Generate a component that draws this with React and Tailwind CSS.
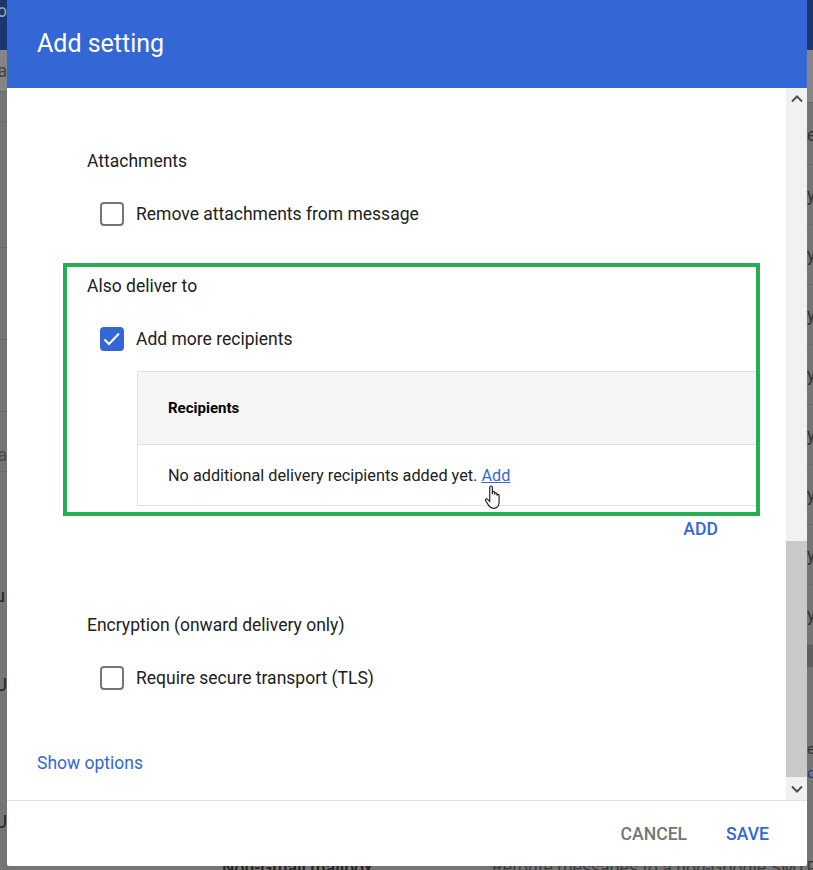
const rightRows = ['e', 'y', 'y', 'y', 'y', 'y', 'y', 'y', 'y'];

const leftSlivers = [
  { className: 'h-[50px] bg-[#1b3670] items-start pt-0 text-[#9aa5bd]', text: 'o' },
  { className: 'h-[42px] bg-[#858585] border-b border-[#6a6a6a] items-start pt-[10px] text-[#444]', text: 'a' },
  { className: 'h-[30px] border-b border-[#6a6a6a]', text: '' },
  { className: 'h-[126px] border-b border-[#6a6a6a]', text: '' },
  { className: 'h-[92px] border-b border-[#6a6a6a]', text: '' },
  { className: 'h-[72px] border-b border-[#6a6a6a]', text: '' },
  { className: 'h-[60px] border-b border-[#6a6a6a] items-start pt-[32px] text-[#4a4a4a]', text: 'a' },
  { className: 'h-[136px] items-start pt-[113px] pr-[2px] text-[#222]', text: 'u' },
  { className: 'h-[86px] items-start pt-[66px] text-[#222]', text: 'U' },
  { className: 'h-[176px] items-start pt-[117px] text-[#222]', text: 'U' },
];

function Checkbox({ checked }) {
  if (checked) {
    return (
      <span className="flex h-6 w-6 shrink-0 items-center justify-center rounded-[4px] bg-[#3367d6]">
        <svg width="24" height="24" viewBox="0 0 24 24" fill="none">
          <path d="M4.500 12.500l4.500 4.500 10-10.500" stroke="#fff" strokeWidth="2" />
        </svg>
      </span>
    );
  }
  return <span className="h-6 w-6 shrink-0 rounded-[4px] border-2 border-[#757575] bg-white" />;
}

function Section({ title, label, checked, className, titleClass = 'pl-[80px]', rowClass = 'pl-[93px]' }) {
  return (
    <div className={className}>
      <div className={`${titleClass} text-[17.5px] leading-[24px] text-[#212121]`}>{title}</div>
      <div className={`${rowClass} mt-[29px] flex items-center gap-3 text-[17.5px] leading-[24px] text-[#212121]`}>
        <Checkbox checked={checked} />
        <span>{label}</span>
      </div>
    </div>
  );
}

function HandCursor() {
  return (
    <svg className="absolute left-[3px] top-[20px]" width="18" height="26" viewBox="0 0 16 24" fill="#fff" stroke="#111" strokeWidth="1">
      <path d="M5 13V3c0-1.600 2.400-1.600 2.400 0v6.500V8c0-1.400 2.200-1.400 2.200 0v2V9c0-1.300 2-1.300 2 0v1.500c0-1.200 2-1.200 2 0V17c0 3-2 5.500-5 5.500-2.500 0-3.500-1-4.500-2.500L1.200 15.500c-.8-1.200.8-2.400 1.800-1.400L5 16z" />
    </svg>
  );
}

export default function App() {
  return (
    <div className="relative h-[870px] w-[813px] overflow-hidden bg-[#757575] font-['Roboto',sans-serif]">
      {/* dimmed page behind the dialog */}
      <div className="flex h-full justify-between">
        <div className="flex w-[7px] flex-col overflow-hidden">
          {leftSlivers.map((row, i) => (
            <div key={i} className={`${row.className} flex shrink-0 justify-end text-[17.6px] leading-[22px]`}>
              {row.text}
            </div>
          ))}
        </div>
        <div className="flex w-[6px] flex-col overflow-hidden">
          <div className="h-[50px] shrink-0 bg-[#1b3670]" />
          <div className="h-[53px] shrink-0 border-b border-[#6a6a6a] bg-[#858585]" />
          <div className="h-[2px] shrink-0" />
          {rightRows.map((text, i) => (
            <div key={i} className="h-[60px] shrink-0 border-b border-[#6a6a6a] pt-[18px] text-[17.6px] leading-[24px] text-[#333]">
              {text}
            </div>
          ))}
          <div className="h-[22px] shrink-0 bg-[#5f5f5f]" />
          <div className="mt-[72px] text-[15px] leading-[20px] text-[#333]">es</div>
          <div className="mt-[4px] text-[15px] leading-[20px] text-[#1a3a8a]">o</div>
        </div>
      </div>
      <div className="absolute bottom-[-8px] left-[222px] text-[17.6px] font-medium leading-[20px] text-[#222]">Non-Gmail mailbox</div>
      <div className="absolute bottom-[-8px] left-[492px] whitespace-nowrap text-[17.6px] leading-[20px] text-[#3c3c3c]">Reroute messages to a non-Google SMTP</div>

      {/* dialog */}
      <div className="absolute left-[7px] top-0 flex h-[866px] w-[800px] flex-col overflow-hidden rounded-b-[2px] bg-white">
        <div className="flex h-[88px] shrink-0 items-center bg-[#3367d6] pl-[30px] text-[25px] text-white">Add setting</div>

        <div className="flex min-h-0 flex-1">
          <div className="min-w-0 flex-1 overflow-hidden">
            <Section className="pt-[61px]" title="Attachments" label="Remove attachments from message" />

            <div className="ml-[56px] mt-[37px] h-[253px] w-[697px] overflow-hidden border-4 border-[#27ae53]">
              <Section className="pt-[7px]" titleClass="pl-[20px]" rowClass="pl-[33px]" title="Also deliver to" label="Add more recipients" checked />
              <div className="ml-[70px] mt-[20px] border border-r-0 border-[#e0e0e0]">
                <div className="flex h-[73px] items-center border-b border-[#e0e0e0] bg-[#f5f5f5] pl-[30px] pt-[1px] text-[15px] font-bold text-black">Recipients</div>
                <div className="flex h-[60px] items-center pl-[30px] pt-[2px] text-[16.25px] text-[#212121]">
                  No additional delivery recipients added yet.
                  <span className="relative ml-1 text-[#3367d6] underline">
                    Add
                    <HandCursor />
                  </span>
                </div>
              </div>
            </div>

            <div className="mr-[68px] mt-[1px] text-right text-[17.6px] font-medium leading-[24px] text-[#3367d6]">ADD</div>

            <Section className="mt-[72px]" title="Encryption (onward delivery only)" label="Require secure transport (TLS)" />

            <div className="mt-[61px] pl-[30px] text-[17.5px] leading-[24px] text-[#3367d6]">Show options</div>
          </div>

          {/* scrollbar */}
          <div className="flex w-[21px] shrink-0 flex-col bg-[#f1f1f1]">
            <div className="flex h-[21px] items-center justify-center">
              <svg width="12" height="8" viewBox="0 0 12 8" fill="none"><path d="M1 6.500l5-5 5 5" stroke="#505050" strokeWidth="2" /></svg>
            </div>
            <div className="h-[432px]" />
            <div className="h-[236px] bg-[#c9c9c9]" />
            <div className="flex h-[23px] items-center justify-center">
              <svg width="12" height="8" viewBox="0 0 12 8" fill="none"><path d="M1 1.500l5 5 5-5" stroke="#505050" strokeWidth="2" /></svg>
            </div>
          </div>
        </div>

        <div className="flex h-[66px] shrink-0 items-center justify-end gap-[39px] border-t border-[#e0e0e0] pr-[38px] pt-[1px] text-[17.6px] font-medium">
          <span className="text-[#757575]">CANCEL</span>
          <span className="text-[#3367d6]">SAVE</span>
        </div>
      </div>
    </div>
  );
}
